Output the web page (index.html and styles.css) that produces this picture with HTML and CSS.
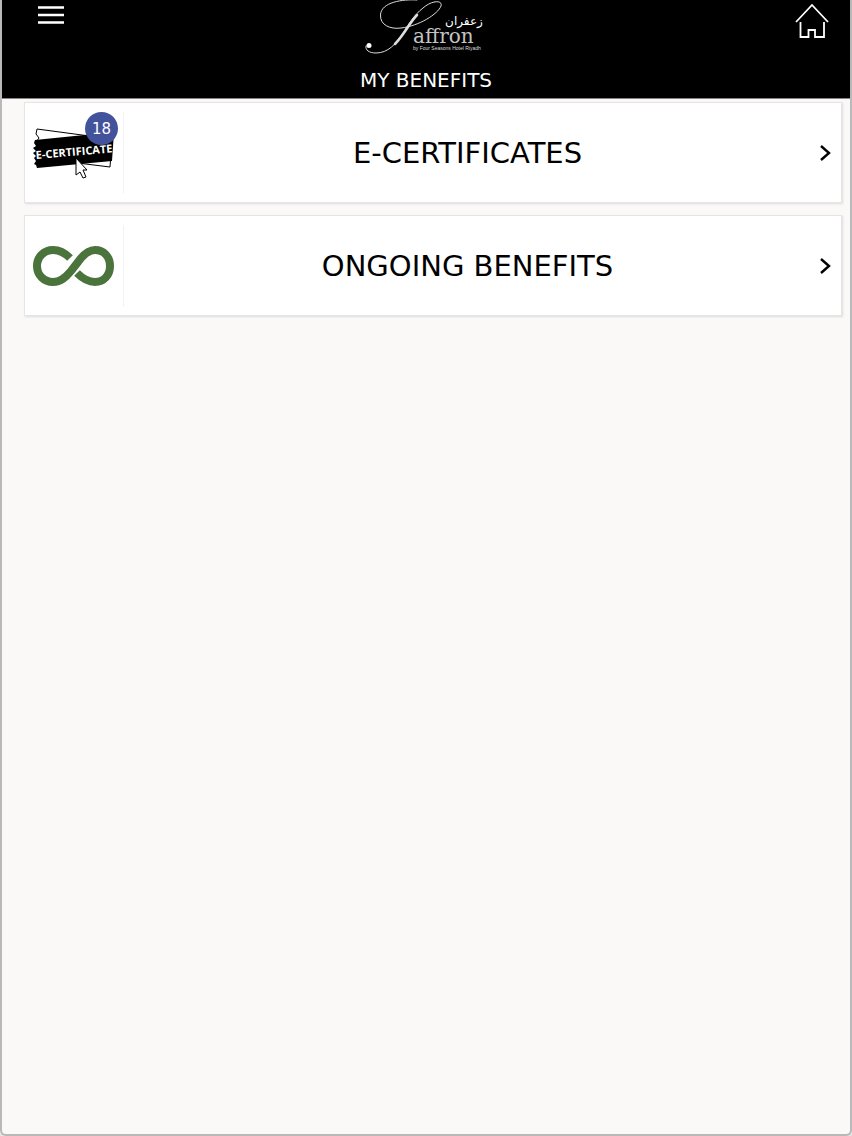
FILE: index.html
```html
<!DOCTYPE html>
<html lang="en">
<head>
  <meta charset="UTF-8">
  <meta name="viewport" content="width=device-width, initial-scale=1.0">
  <title>My Benefits - Saffron</title>
  <link rel="stylesheet" href="styles.css">
</head>
<body>
  <div class="page">
    <header class="header">
      <div class="header-bar">
        <button class="menu-btn" type="button" aria-label="Menu">
          <svg width="28" height="20" viewBox="0 0 28 20">
            <path d="M1 2.5h26M1 10h26M1 17.5h26" stroke="#fff" stroke-width="2.6"/>
          </svg>
        </button>
        <svg class="logo" width="122" height="56" viewBox="0 0 122 56" role="img" aria-label="Saffron">
          <g fill="none" stroke="#ddd" stroke-linecap="round">
            <path d="M52 0C38-1 16 2 15.500 15C15 25 25 29.500 36 28C54 26 73 14 76 6C78 0 67 0 58 8C49 15 44 24 38 33C31 44 23 53 11 53C4 53 0 50 1 46" stroke-width="1"/>
            <path d="M52 15C45 22 39 35 30 44" stroke-width="2.500"/>
          </g>
          <circle cx="4" cy="45.500" r="2.500" fill="#fff"/>
          <text class="logo-arabic" x="99" y="25" text-anchor="middle">زعفران</text>
          <text class="logo-name" x="48" y="43">affron</text>
          <text class="logo-tag" x="48" y="50">by Four Seasons Hotel Riyadh</text>
        </svg>
        <a class="home-link" href="#" aria-label="Home">
          <svg width="34" height="36" viewBox="0 0 34 36">
            <path d="M1 19L17 2l16 17M5.500 19v15h8v-7h6.500v7h9V19" fill="none" stroke="#fff" stroke-width="1.800"/>
          </svg>
        </a>
      </div>
      <h1>MY BENEFITS</h1>
    </header>

    <main class="benefits">
      <a class="benefit" href="#">
        <span class="benefit-icon">
          <svg width="98" height="82" viewBox="0 8 98 82">
            <!-- ticket behind -->
            <path d="M12 25L87 35L85 63L12 54L14 50L11 46L14 42L11 38L14 34L11 30z" fill="#fff" stroke="#000" stroke-width="1"/>
            <!-- black ticket -->
            <path d="M10 36L89 28L87 57L12 64L11 61L9 60L11 57L9 54L11 52L8 49L11 47L8 44L11 42L9 39z" fill="#000"/>
            <text class="ticket-text" x="11" y="55" transform="rotate(-5 11 55)">E-CERTIFICATE</text>
            <path d="M51 54L51 71L55 68L58 74L61 73L58 66L62 66z" fill="#fff" stroke="#000" stroke-width="1"/>
          </svg>
          <span class="badge">18</span>
        </span>
        <span class="benefit-title">E-CERTIFICATES</span>
        <svg class="chevron" width="12" height="18" viewBox="0 0 12 18">
          <path d="M2 2l8 7-8 7" fill="none" stroke="#000" stroke-width="2.400"/>
        </svg>
      </a>

      <a class="benefit" href="#">
        <span class="benefit-icon">
          <svg width="98" height="82" viewBox="0 8 98 82">
            <path d="M45 41C40 36 35 33 28 33C19 33 12 40 12 49C12 58 19 65 28 65C36 65 41 60 46 54L53 45C58 38 63 33 70 33C79 33 85 40 85 49C85 58 79 65 70 65C63 65 57 61 52 56" fill="none" stroke="#4b733c" stroke-width="8"/>
          </svg>
        </span>
        <span class="benefit-title">ONGOING BENEFITS</span>
        <svg class="chevron" width="12" height="18" viewBox="0 0 12 18">
          <path d="M2 2l8 7-8 7" fill="none" stroke="#000" stroke-width="2.400"/>
        </svg>
      </a>
    </main>
  </div>
</body>
</html>
```

FILE: styles.css
```css
* {
  box-sizing: border-box;
}
body {
  font-family: Verdana, 'DejaVu Sans', sans-serif;
  margin: 0;
  background-color: #e4e4e3;
}
.page {
  min-height: 100vh;
  background-color: #faf9f7;
  border: 2px solid #b9b9b9;
  border-top: 0;
  border-radius: 0 0 6px 6px;
}
.header {
  background-color: #000;
  color: #fff;
  border-bottom: 1px solid #858388;
}
.header-bar {
  display: flex;
  align-items: flex-start;
  justify-content: space-between;
  padding: 0 21px 0 35px;
  height: 66px;
}
.menu-btn {
  background: none;
  border: none;
  padding: 5px 0 0;
  cursor: pointer;
}
.menu-btn svg,
.home-link svg,
.logo {
  display: block;
}
.logo {
  margin-right: 8px;
}
.home-link {
  padding-top: 3px;
}
.logo-name {
  font-family: 'DejaVu Serif', serif;
  font-size: 20px;
  fill: #c4c4c4;
}
.logo-arabic {
  font-family: 'DejaVu Sans', sans-serif;
  font-size: 12px;
  fill: #fff;
}
.logo-tag {
  font-family: 'Liberation Sans', sans-serif;
  font-size: 5px;
  fill: #ddd;
}
.header h1 {
  margin: 0;
  padding-bottom: 3px;
  font-size: 20px;
  font-weight: normal;
  line-height: 29px;
  text-align: center;
}
.benefits {
  display: flex;
  flex-direction: column;
  gap: 12px;
  padding: 3px 8px 20px 22px;
}
.benefit {
  display: flex;
  align-items: center;
  min-height: 101px;
  padding-right: 10px;
  background-color: #fff;
  border: 1px solid #e6e4e5;
  box-shadow: 1px 1px 2px #dddbe0;
  color: #000;
  text-decoration: none;
}
.benefit-icon {
  position: relative;
  flex: none;
  width: 99px;
  border-right: 1px solid #f3f3f3;
}
.benefit-icon svg {
  display: block;
}
.ticket-text {
  font-family: 'Open Sans', sans-serif;
  font-size: 11px;
  font-weight: bold;
  fill: #fff;
}
.badge {
  position: absolute;
  top: 0;
  right: 5px;
  width: 33px;
  height: 33px;
  border-radius: 50%;
  background-color: #42539c;
  color: #fff;
  font-size: 15px;
  line-height: 34px;
  text-align: center;
}
.benefit-title {
  flex: 1;
  padding-right: 8px;
  font-size: 29px;
  text-align: center;
}
.chevron {
  flex: none;
}
```
